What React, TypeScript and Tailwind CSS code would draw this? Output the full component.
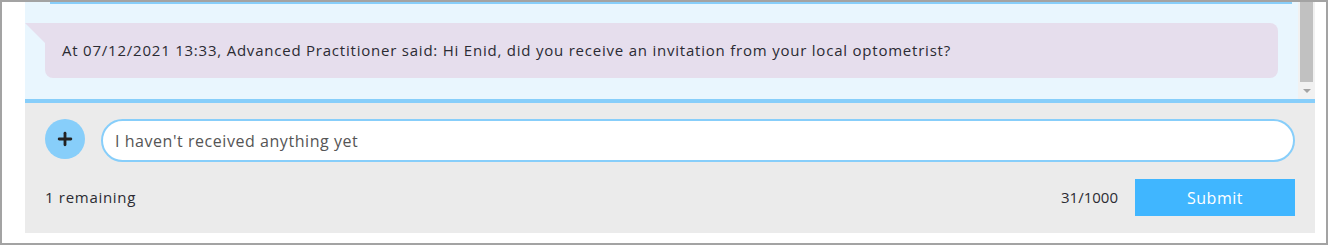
import { Plus } from "lucide-react";

const font = { fontFamily: '"Open Sans", "Noto Sans", sans-serif' };

export default function App() {
  return (
    <div
      className="flex h-[245px] w-[1328px] flex-col border-2 border-[#a3a3a3] bg-white pb-[10px] pl-[23px] pr-[11px] text-[#2b2b33]"
      style={font}
    >
      {/* message history */}
      <div className="flex h-[97px] bg-[#e9f6fe]">
        <div className="flex-1 overflow-hidden">
          <div className="ml-[25px] mr-[6px] h-[2px] bg-[#87cefa]" />
          <div className="mt-[19px] flex pr-[20px]">
            <div className="h-[20px] w-[20px] bg-[#e6deed] [clip-path:polygon(0_0,100%_0,100%_100%)]" />
            <div className="flex h-[55px] flex-1 items-center rounded-lg rounded-tl-none bg-[#e6deed] pl-[17px] text-[15px] tracking-[0.78px]">
              At 07/12/2021 13:33, Advanced Practitioner said: Hi Enid, did you receive an invitation from your local optometrist?
            </div>
          </div>
        </div>
        <div className="flex w-[17px] flex-col bg-[#f1f1f1]">
          <div className="mx-[2px] h-[80px] bg-[#c1c1c1]" />
          <div className="flex flex-1 items-center justify-center">
            <div className="h-0 w-0 border-x-[4px] border-t-[4px] border-x-transparent border-t-[#a3a3a3]" />
          </div>
        </div>
      </div>

      <div className="h-[4px] bg-[#87cefa]" />

      {/* composer */}
      <div className="flex flex-1 flex-col bg-[#ebebeb] px-[20px] pt-[16px]">
        <div className="flex items-start gap-[16px]">
          <button
            type="button"
            className="flex h-[40px] w-[40px] shrink-0 items-center justify-center rounded-full bg-[#87cefa] text-[#222]"
          >
            <Plus className="h-[20px] w-[20px]" strokeWidth={3.4} />
          </button>
          <div className="flex h-[43px] flex-1 items-center rounded-full border-2 border-[#87cefa] bg-white pl-[12px] text-[16px] tracking-[0.55px] text-[#555]">
            I haven&apos;t received anything yet
          </div>
        </div>
        <div className="mt-[17px] flex items-center justify-between">
          <span className="text-[15px] tracking-[0.7px]">1 remaining</span>
          <div className="flex items-center gap-[17px]">
            <span className="text-[15px]">31/1000</span>
            <button
              type="button"
              className="h-[37px] w-[160px] bg-[#40b6ff] text-[16px] tracking-[0.5px] text-white"
            >
              Submit
            </button>
          </div>
        </div>
      </div>
    </div>
  );
}
